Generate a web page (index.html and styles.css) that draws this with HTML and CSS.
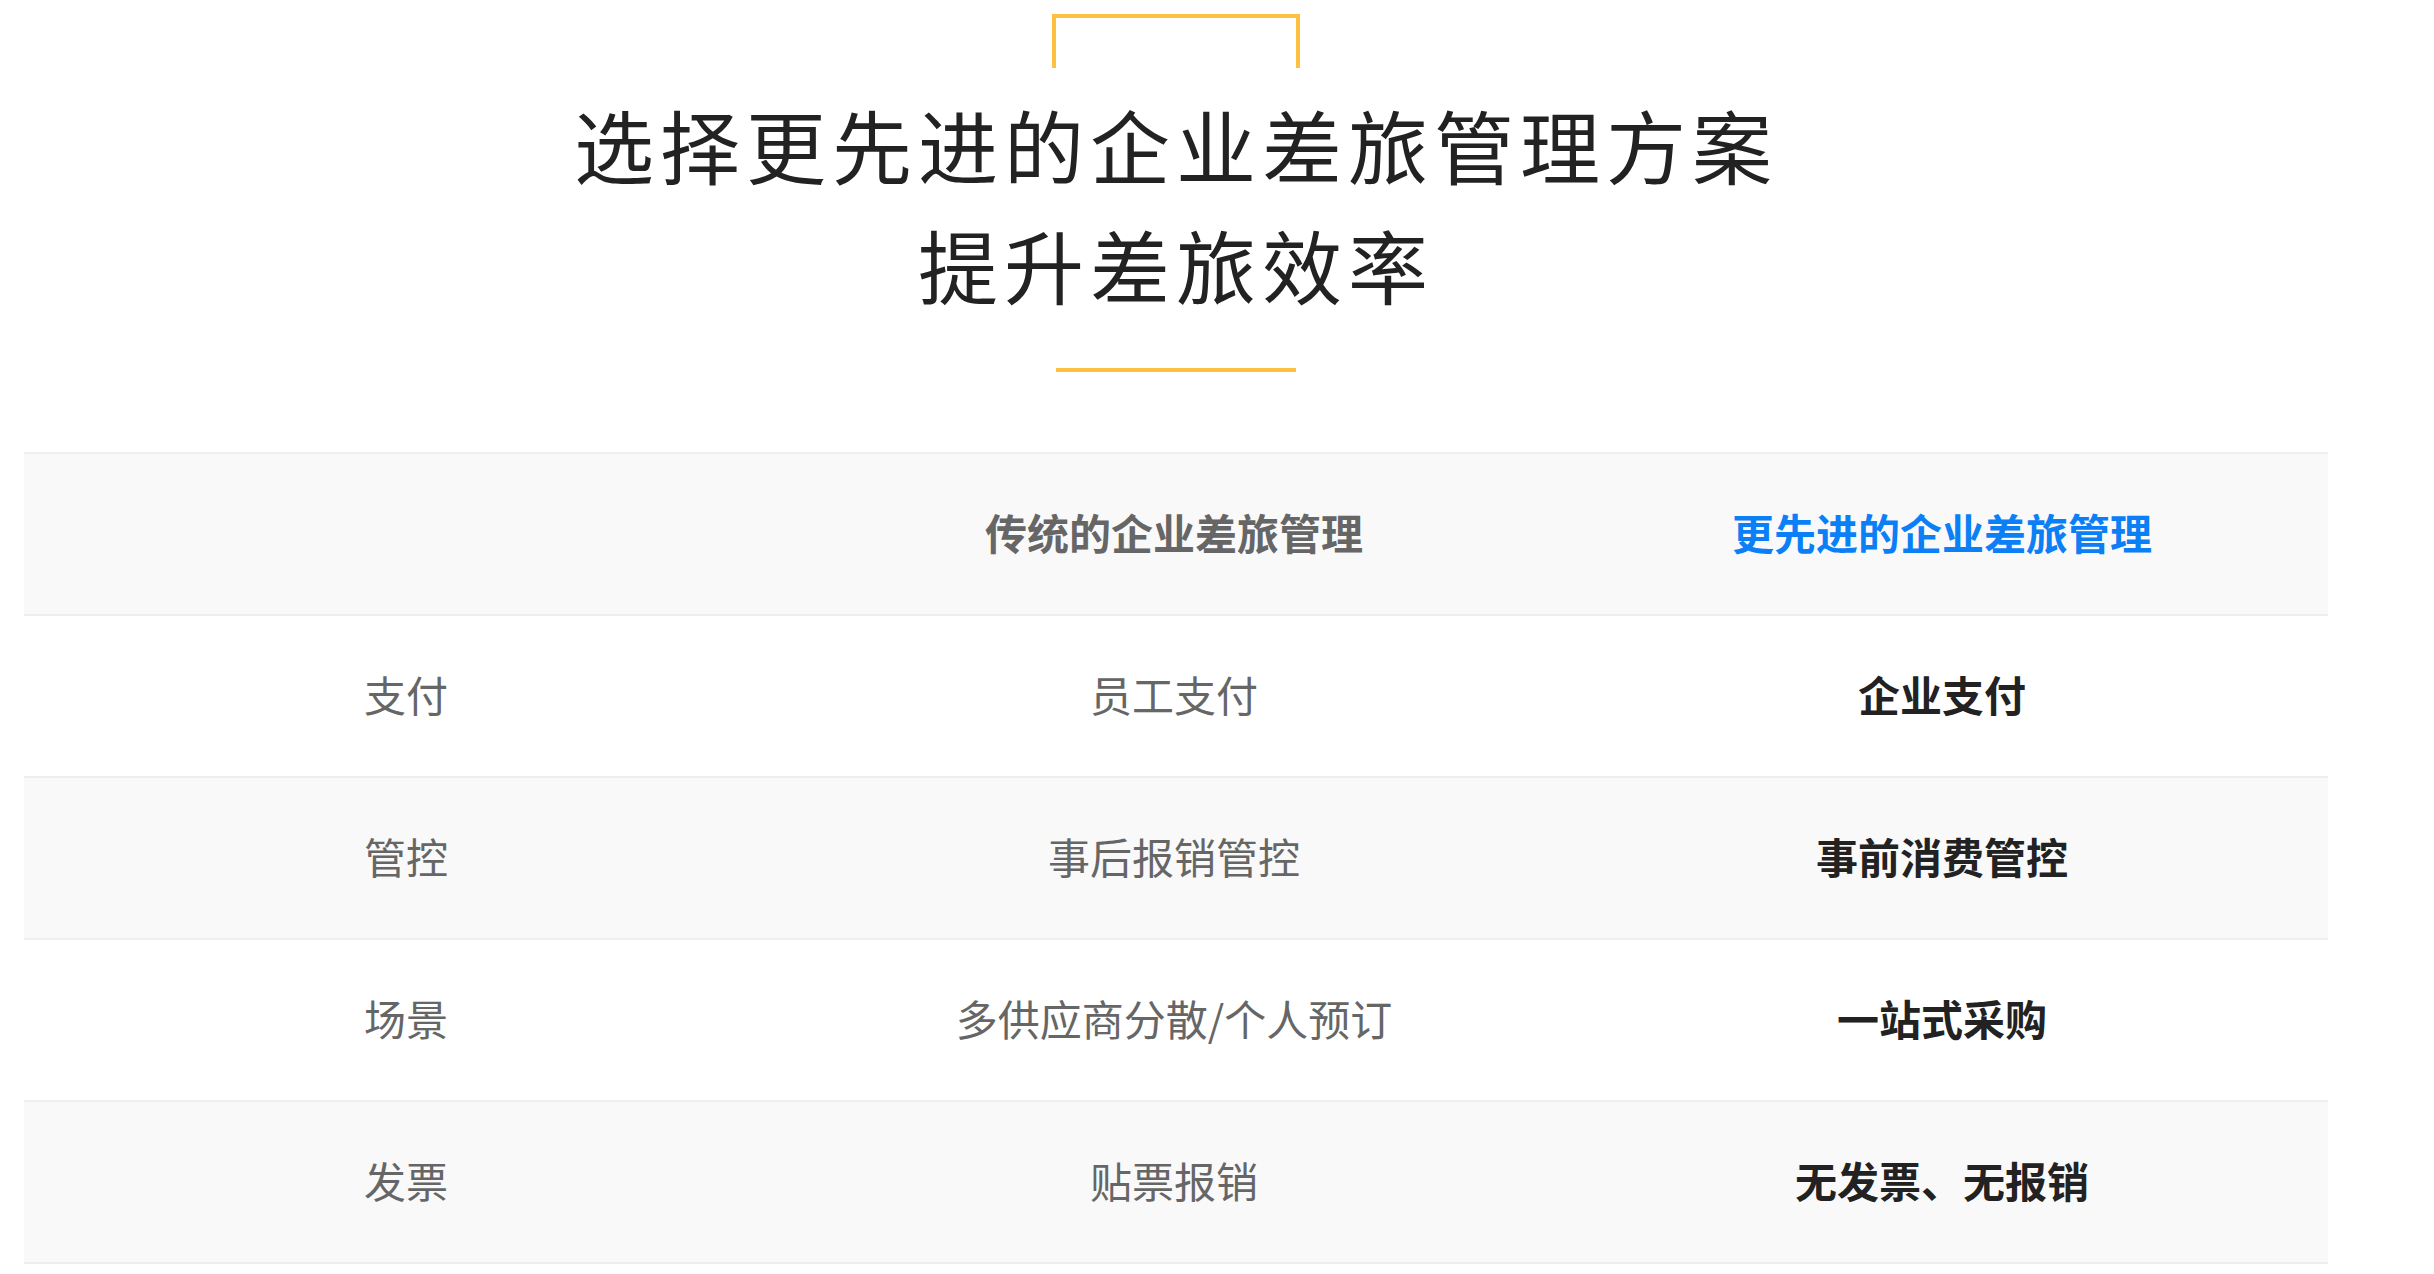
FILE: index.html
```html
<!DOCTYPE html>
<html lang="zh-CN">
  <head>
    <meta charset="utf-8">
    <title>选择更先进的企业差旅管理方案</title>
    <link rel="stylesheet" href="styles.css">
  </head>
  <body>
    <div class="wrap">
      <div class="bracket"></div>
      <h1 class="title">选择更先进的企业差旅管理方案<br>提升差旅效率</h1>
      <div class="underline"></div>

      <div class="compare">
        <div class="row head">
          <div></div>
          <div class="old">传统的企业差旅管理</div>
          <div class="new">更先进的企业差旅管理</div>
        </div>
        <div class="row">
          <div>支付</div>
          <div>员工支付</div>
          <div class="strong">企业支付</div>
        </div>
        <div class="row shade">
          <div>管控</div>
          <div>事后报销管控</div>
          <div class="strong">事前消费管控</div>
        </div>
        <div class="row">
          <div>场景</div>
          <div>多供应商分散/个人预订</div>
          <div class="strong">一站式采购</div>
        </div>
        <div class="row shade">
          <div>发票</div>
          <div>贴票报销</div>
          <div class="strong">无发票、无报销</div>
        </div>
      </div>
    </div>
  </body>
</html>
```

FILE: styles.css
```css
body {
  margin: 0;
  background: #fff;
  font-family: "Noto Sans CJK SC", "Noto Sans", sans-serif;
  color: #222;
}

.wrap {
  width: 2304px;
  margin-left: 24px;
  padding-top: 14px;
  display: flex;
  flex-direction: column;
  align-items: center;
}

/* the yellow bracket above the heading */
.bracket {
  width: 240px;
  height: 50px;
  border: 4px solid #ffbf3f;
  border-bottom: none;
}

.title {
  margin: 15px 0 0;
  font-size: 80px;
  font-weight: 400;
  line-height: 120px;
  letter-spacing: 6px;
  text-align: center;
  color: #222;
}

.underline {
  width: 240px;
  height: 4px;
  margin-top: 45px;
  background: #ffbf3f;
}

/* comparison table */
.compare {
  width: 100%;
  margin-top: 80px;
  border-top: 2px solid #eee;
}

.row {
  display: grid;
  grid-template-columns: 1fr 1fr 1fr;
  height: 160px;
  border-bottom: 2px solid #eee;
  font-size: 42px;
  color: #666;
}

.row > div {
  display: flex;
  align-items: center;
  justify-content: center;
  padding: 0 4px 5px 0;
}

.head, .shade {
  background: #f9f9f9;
}

.head .old {
  font-weight: 700;
  color: #666;
}

.head .new {
  font-weight: 700;
  color: #0b7ff5;
}

.strong {
  font-weight: 700;
  color: #222;
}
```
